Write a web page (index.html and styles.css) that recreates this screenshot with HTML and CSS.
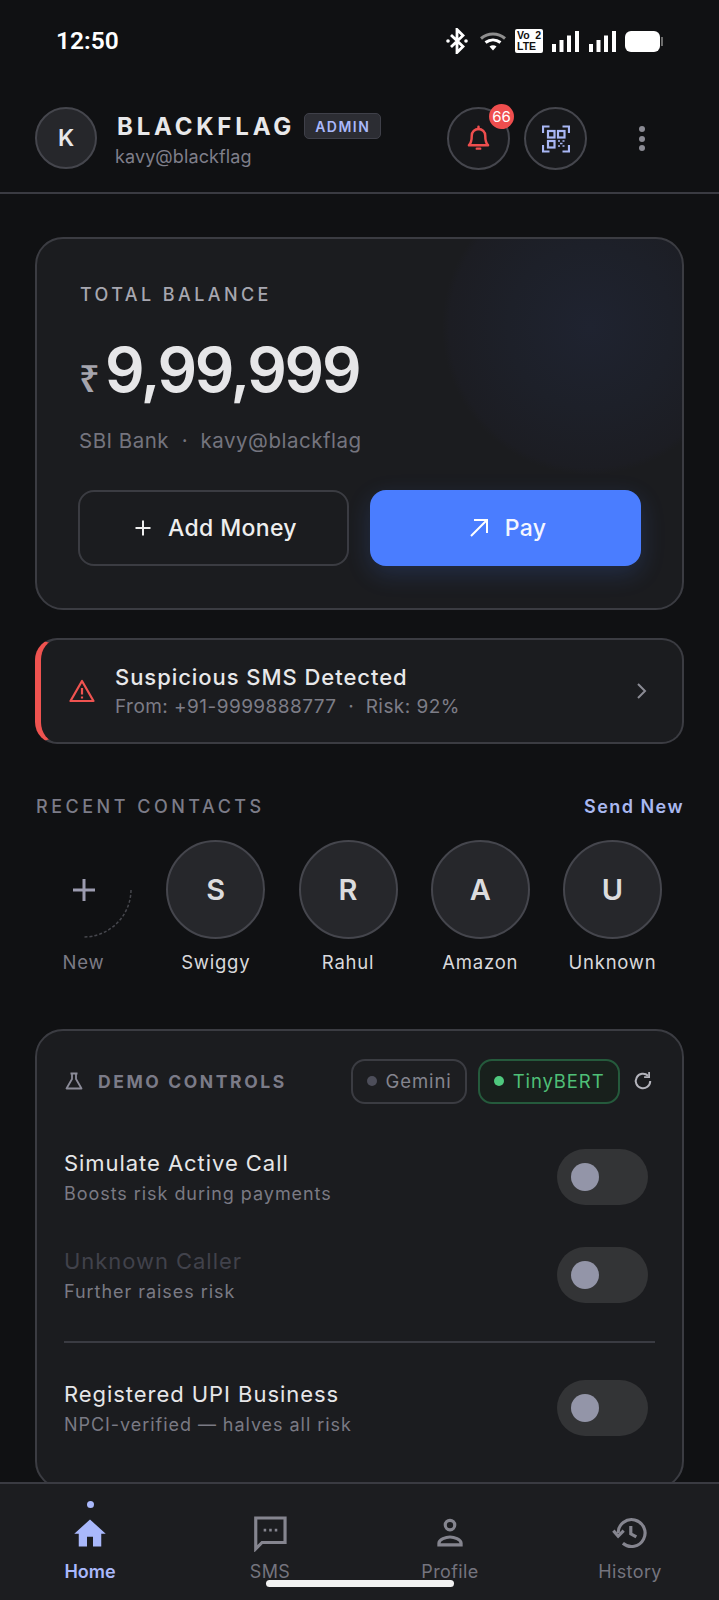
FILE: index.html
```html
<!DOCTYPE html>
<html lang="en">
<head>
<meta charset="utf-8">
<title>Blackflag</title>
<link rel="stylesheet" href="styles.css">
</head>
<body>
<div class="app">
  <div class="status">
    <span class="time">12:50</span>
    <div class="status-icons">
      <svg class="ic-bt" width="22" height="26" viewBox="0 0 22 26"><path d="M5 7l12 11.500-6 6V1.500l6 6L5 19" fill="none" stroke="#fff" stroke-width="2.800"/><circle cx="2" cy="13" r="1.800" fill="#fff"/><circle cx="20" cy="13" r="1.800" fill="#fff"/></svg>
      <svg class="ic-wifi" width="26" height="20" viewBox="0 0 26 20"><path d="M1 7.500C8 1.500 18 1.500 25 7.500" fill="none" stroke="#8e8e8e" stroke-width="3"/><path d="M5.500 11.500C10 8 16 8 20.500 11.500" fill="none" stroke="#fff" stroke-width="3"/><path d="M9.500 15.500c2-1.800 5-1.800 7 0L13 19.500z" fill="#fff"/></svg>
      <div class="volte"><span>Vo</span><span class="volte-2">2</span><span class="volte-lte">LTE</span></div>
      <svg class="ic-sig1" width="27" height="21" viewBox="0 0 27 21"><g fill="#fff"><rect x="0" y="13" width="4" height="8"/><rect x="7.500" y="9" width="4" height="12"/><rect x="15" y="4.500" width="4" height="16.500"/><rect x="23" y="0" width="4" height="21"/></g></svg>
      <svg class="ic-sig2" width="27" height="21" viewBox="0 0 27 21"><g fill="#fff"><rect x="0" y="13" width="4" height="8"/><rect x="7.500" y="9" width="4" height="12"/><rect x="15" y="4.500" width="4" height="16.500"/><rect x="23" y="0" width="4" height="21"/></g></svg>
      <div class="battery"><div class="battery-body"></div><div class="battery-tip"></div></div>
    </div>
  </div>

  <header class="header">
    <div class="avatar">K</div>
    <div class="who">
      <div class="brand-row"><span class="brand">BLACKFLAG</span><span class="admin">ADMIN</span></div>
      <div class="handle">kavy@blackflag</div>
    </div>
    <div class="head-actions">
      <button class="round">
        <svg width="27" height="27" viewBox="0 0 24 24" fill="none" stroke="#ef4e4e" stroke-width="2.200" stroke-linecap="round" stroke-linejoin="round"><path d="M12 3.500a6 6 0 0 0-6 6c0 5-1 7-2.500 8.500h17C19 16.500 18 14.500 18 9.500a6 6 0 0 0-6-6z"/><path d="M12 1.500v2M10.500 21h3"/></svg>
        <span class="count">66</span>
      </button>
      <button class="round">
        <svg width="28" height="28" viewBox="0 0 28 28" fill="none" stroke="#a9b7f5" stroke-width="2.200"><path d="M1 8V1.500h6.500M20.500 1.500H27V8M1 20v6.500h6.500M20.500 26.500H27V20"/><rect x="6" y="6" width="6.500" height="6.500"/><rect x="16" y="6" width="6.500" height="6.500"/><rect x="6" y="16" width="6.500" height="6.500"/><path d="M16 16h2M20.500 16h2M18 18.500h2.500M16 21h2M20.500 21h2" stroke-width="1.600"/></svg>
      </button>
      <div class="kebab"><i></i><i></i><i></i></div>
    </div>
  </header>

  <main class="main">
    <section class="balance">
      <div class="balance-label">TOTAL BALANCE</div>
      <div class="amount"><span class="rupee">₹</span><span class="digits">9,99,999</span></div>
      <div class="bank">SBI Bank &nbsp;·&nbsp; kavy@blackflag</div>
      <div class="balance-actions">
        <button class="btn btn-ghost">
          <svg width="20" height="20" viewBox="0 0 20 20" stroke="#eee" stroke-width="2" fill="none"><path d="M10 2.500v15M2.500 10h15"/></svg>
          Add Money
        </button>
        <button class="btn btn-pay">
          <svg width="22" height="22" viewBox="0 0 22 22" stroke="#fff" stroke-width="2" fill="none"><path d="M3 19L19 3M6 3h13v13"/></svg>
          Pay
        </button>
      </div>
    </section>

    <section class="alert">
      <svg width="26" height="24" viewBox="0 0 26 24" fill="none" stroke="#ef5350" stroke-width="2.200" stroke-linejoin="round"><path d="M13 2L1.500 22h23z"/><path d="M13 9v6.500M13 17.500v2"/></svg>
      <div class="alert-text">
        <div class="alert-title">Suspicious SMS Detected</div>
        <div class="alert-sub">From: +91-9999888777 &nbsp;·&nbsp; Risk: 92%</div>
      </div>
      <svg width="12" height="18" viewBox="0 0 12 18" fill="none" stroke="#8b8b94" stroke-width="2"><path d="M3 2l7 7-7 7"/></svg>
    </section>

    <div class="section-head"><span class="section-title">RECENT CONTACTS</span><span class="send-new">Send New</span></div>

    <div class="contacts">
      <div class="contact">
        <div class="circle circle-new">
          <svg class="new-ring" width="99" height="99" viewBox="0 0 99 99" fill="none"><path d="M97 50A47.500 47.500 0 0 1 50 97" stroke="#46474d" stroke-width="1.500" stroke-dasharray="3 2"/></svg>
          <svg width="26" height="26" viewBox="0 0 26 26" stroke="#9c9cb0" stroke-width="3" fill="none"><path d="M13 2v22M2 13h22"/></svg>
        </div>
        <span class="contact-name name-new">New</span>
      </div>
      <div class="contact"><div class="circle">S</div><span class="contact-name">Swiggy</span></div>
      <div class="contact"><div class="circle">R</div><span class="contact-name">Rahul</span></div>
      <div class="contact"><div class="circle">A</div><span class="contact-name">Amazon</span></div>
      <div class="contact"><div class="circle">U</div><span class="contact-name">Unknown</span></div>
    </div>

    <section class="demo">
      <div class="demo-head">
        <svg width="18" height="18" viewBox="0 0 18 18" fill="none" stroke="#8b8b98" stroke-width="1.800" stroke-linejoin="round"><path d="M5.500 1.500h7M7 1.500V7L1.500 16.500h15L11 7V1.500"/></svg>
        <span class="demo-title">DEMO CONTROLS</span>
        <span class="pill"><i class="dot dot-grey"></i>Gemini</span>
        <span class="pill pill-green"><i class="dot dot-green"></i>TinyBERT</span>
        <svg class="reload" width="20" height="20" viewBox="0 0 18 18" fill="none" stroke="#b4b4bc" stroke-width="1.800"><path d="M15.500 9a6.500 6.500 0 1 1-2-4.700"/><path d="M14.500 1v4.500H10" stroke-width="1.600"/></svg>
      </div>
      <div class="row">
        <div><div class="row-title">Simulate Active Call</div><div class="row-sub">Boosts risk during payments</div></div>
        <div class="toggle"><i></i></div>
      </div>
      <div class="row row-second">
        <div><div class="row-title row-title-off">Unknown Caller</div><div class="row-sub">Further raises risk</div></div>
        <div class="toggle"><i></i></div>
      </div>
      <div class="divider"></div>
      <div class="row">
        <div><div class="row-title">Registered UPI Business</div><div class="row-sub">NPCI-verified — halves all risk</div></div>
        <div class="toggle"><i></i></div>
      </div>
    </section>
  </main>

  <nav class="nav">
    <div class="tab tab-on">
      <i class="tab-dot"></i>
      <svg width="36" height="36" viewBox="0 0 24 24" fill="#a9b8fb"><path d="M12 3L1.500 12.500H4.500V21h5.500v-6.500h4V21h5.500v-8.500h3z"/></svg>
      <span>Home</span>
    </div>
    <div class="tab">
      <svg width="38" height="38" viewBox="0 0 24 24" fill="none" stroke="#85858f" stroke-width="2"><path d="M3 2.500h18.500v15.500H7L3 22z"/><path d="M8 10.200h1.600M11.500 10.200h1.600M15 10.200h1.600" stroke-width="1.800"/></svg>
      <span>SMS</span>
    </div>
    <div class="tab">
      <svg width="38" height="38" viewBox="0 0 24 24" fill="none" stroke="#85858f" stroke-width="2"><circle cx="12" cy="7" r="3"/><path d="M5 19.500v-1c0-2.500 4.500-4 7-4s7 1.500 7 4v1z"/></svg>
      <span>Profile</span>
    </div>
    <div class="tab">
      <svg width="38" height="38" viewBox="0 0 24 24" fill="none" stroke="#85858f" stroke-width="2"><path d="M4.500 12A8.500 8.500 0 1 1 7.500 18.500"/><path d="M1.500 10.500L4.500 14l3.500-3.500" stroke-width="2"/><path d="M12.500 7.500V12.500l3.500 2"/></svg>
      <span>History</span>
    </div>
    <div class="home-bar"></div>
  </nav>
</div>
</body>
</html>
```

FILE: styles.css
```css
* { box-sizing: border-box; }
html, body { margin: 0; padding: 0; background: #101113; }
body { font-family: Inter, "Liberation Sans", sans-serif; color: #e8e8ea; }
i { display: block; }
button { font-family: inherit; }

.app { width: 719px; height: 1600px; display: flex; flex-direction: column; overflow: hidden; }

.status { height: 84px; flex: none; display: flex; justify-content: space-between; align-items: flex-start; padding: 26px 56px 0 56px; }
.time { font-family: Roboto, sans-serif; font-weight: 600; font-size: 24.500px; line-height: 30px; color: #fff; }
.status-icons { display: flex; align-items: center; height: 30px; }
.ic-bt { margin-right: 12px; }
.ic-wifi { margin-right: 9px; }
.ic-sig1 { margin-right: 10px; }
.ic-sig2 { margin-right: 9px; }
.volte { width: 28px; height: 24px; background: #fff; border-radius: 2px; margin-right: 9px; color: #111; font-family: "Liberation Sans", sans-serif; font-weight: 700; font-size: 10.500px; line-height: 11px; padding: 1px 2px; display: grid; grid-template-columns: 1fr auto; }
.volte-lte { grid-column: 1 / 3; }
.battery { display: flex; align-items: center; }
.battery-body { width: 35px; height: 21px; background: #fff; border-radius: 6px; }
.battery-tip { width: 2px; height: 9px; background: #6c6c6c; margin-left: 1px; }

.header { height: 110px; flex: none; border-bottom: 2px solid #3a3b42; display: flex; align-items: flex-start; padding: 23px 0 0 35px; }
.avatar { width: 62px; height: 62px; border-radius: 50%; background: #26272b; border: 2px solid #45464d; display: flex; align-items: center; justify-content: center; font-size: 23px; font-weight: 600; flex: none; }
.who { margin-left: 18px; margin-top: 4px; }
.brand-row { display: flex; align-items: center; height: 30px; }
.brand { font-size: 24px; font-weight: 700; letter-spacing: 3.800px; margin-left: 2px; }
.admin { margin-left: 9px; height: 26px; padding: 0 10px; border-radius: 5px; background: #2c2d33; border: 1px solid #3f4049; color: #a9b8fb; font-size: 14px; font-weight: 600; letter-spacing: 1.500px; display: flex; align-items: center; }
.handle { font-size: 18px; color: #7f7f8a; line-height: 22px; margin-top: 5px; letter-spacing: .1px; }
.head-actions { margin-left: auto; display: flex; align-items: center; gap: 14px; padding-right: 74px; }
.round { width: 63px; height: 63px; border-radius: 50%; background: #17181b; border: 2px solid #45464d; display: flex; align-items: center; justify-content: center; padding: 0; position: relative; }
.count { position: absolute; top: -5px; right: -6px; width: 25px; height: 25px; border-radius: 50%; background: #ef4e4e; color: #fff; font-size: 15px; display: flex; align-items: center; justify-content: center; }
.kebab { margin-left: 38px; display: flex; flex-direction: column; gap: 3.500px; }
.kebab i { width: 6px; height: 6px; border-radius: 50%; background: #8b8b94; }

.main { flex: 1; min-height: 0; overflow: hidden; padding: 43px 35px 0; }

.balance { height: 373px; border-radius: 28px; border: 2px solid #3b3c42; padding: 45px 41px 0; background: radial-gradient(circle 148px at 553px 88px, #1f2330 0%, #1d2029 55%, #1c1d23 95%, rgba(27,28,31,0) 100%), #1b1c1f; }
.balance-label { font-size: 18px; font-weight: 500; letter-spacing: 3.400px; color: #a7a7b0; line-height: 22px; margin-left: 2px; }
.amount { display: flex; align-items: baseline; margin: 25px 0 0 1px; height: 78px; }
.rupee { font-size: 36px; color: #a5a5ae; font-weight: 600; width: 26px; font-family: "Noto Sans", "DejaVu Sans", sans-serif; }
.digits { font-size: 62px; font-weight: 600; letter-spacing: -2.300px; color: #e6e6e8; line-height: 78px; }
.bank { font-size: 20.500px; color: #74747e; margin: 19px 0 0 1px; line-height: 26px; letter-spacing: .5px; }
.balance-actions { display: grid; grid-template-columns: 1fr 1fr; gap: 21px; margin-top: 36px; }
.btn { height: 76px; border-radius: 16px; display: flex; align-items: center; justify-content: center; gap: 15px; font-size: 23px; font-weight: 500; letter-spacing: .35px; padding: 0 0 0 3px; }
.btn-ghost { background: #1b1c1f; border: 2px solid #3b3c42; color: #eee; }
.btn-pay { background: #4a7dff; border: none; color: #f4f6ff; box-shadow: 0 8px 24px rgba(74,125,255,.18); }

.alert { height: 106px; margin-top: 28px; border-radius: 22px; border: 2px solid #3b3c42; border-left: 6px solid #ef5350; background: #1b1c1f; display: flex; align-items: center; padding: 0 35px 0 28px; }
.alert-text { flex: 1; margin-left: 20px; }
.alert-title { font-size: 22px; font-weight: 500; line-height: 28px; letter-spacing: .95px; }
.alert-sub { font-size: 19px; color: #7d7d87; line-height: 24px; margin-top: 4px; letter-spacing: .45px; }

.section-head { display: flex; justify-content: space-between; align-items: center; margin-top: 49px; height: 26px; }
.section-title { font-size: 18px; font-weight: 500; letter-spacing: 3.500px; color: #7c7c88; margin-left: 1px; }
.send-new { font-size: 18px; font-weight: 600; color: #a9b8f0; letter-spacing: 1.450px; }

.contacts { display: grid; grid-template-columns: repeat(5, 99px); justify-content: space-between; margin: 21px 0 0 -1px; width: 628px; }
.contact { display: flex; flex-direction: column; align-items: center; gap: 11px; }
.circle { width: 99px; height: 99px; border-radius: 50%; background: #26272b; border: 2px solid #45464d; display: flex; align-items: center; justify-content: center; font-size: 29px; font-weight: 600; color: #dcdcde; position: relative; }
.circle-new { background: none; border: none; }
.new-ring { position: absolute; inset: 0; }
.contact-name { font-size: 18.500px; color: #d9d9dc; line-height: 24px; white-space: nowrap; letter-spacing: .75px; }
.name-new { color: #7b7b86; }

.demo { margin-top: 55px; height: 460px; border-radius: 28px; border: 2px solid #3b3c42; background: #1b1c1f; padding: 28px 27px 0; }
.demo-head { display: flex; align-items: center; height: 44px; }
.demo-head > svg:first-child { margin-left: 1px; }
.demo-title { font-size: 17.500px; font-weight: 700; letter-spacing: 2.600px; color: #7b7b88; margin-left: 15px; margin-right: auto; }
.pill { height: 45px; padding: 0 13.500px; border-radius: 14px; border: 2px solid #3b3c42; display: flex; align-items: center; gap: 9px; font-size: 18.500px; letter-spacing: .9px; color: #85858f; background: #1d1e21; }
.pill-green { margin-left: 11px; padding: 0 13.500px; border-color: #255a3c; color: #4fbf77; background: #18201c; }
.dot { width: 10px; height: 10px; border-radius: 50%; }
.dot-grey { background: #4d4e5a; }
.dot-green { background: #4fc97e; }
.reload { margin-left: 13px; margin-right: 2px; }

.row { display: flex; justify-content: space-between; align-items: center; height: 56px; margin-top: 41px; padding-right: 7px; }
.demo-head + .row { margin-top: 46px; }
.row-second { margin-top: 42px; }
.row-title { font-size: 22px; line-height: 28px; font-weight: 400; color: #e6e6e8; letter-spacing: .95px; }
.row-title-off { color: #41424b; }
.row-sub { font-size: 18px; line-height: 24px; color: #7a7a84; margin-top: 5px; letter-spacing: .95px; }
.toggle { width: 91px; height: 56px; border-radius: 28px; background: #333436; display: flex; align-items: center; padding-left: 14px; }
.toggle i { width: 28px; height: 28px; border-radius: 50%; background: #9395a8; }
.divider { height: 2px; background: #3a3b42; margin-top: 38px; }
.divider + .row { margin-top: 37px; }

.nav { height: 118px; flex: none; background: #1c1d20; border-top: 2px solid #3a3b42; display: grid; grid-template-columns: repeat(4, 180px); position: relative; }
.tab { display: flex; flex-direction: column; align-items: center; padding-top: 30px; color: #74747e; font-size: 18px; position: relative; }
.tab span { margin-top: 8px; line-height: 24px; letter-spacing: .4px; }
.tab-on { color: #a9b8fb; font-weight: 600; }
.tab-on svg { margin: 1px 0; }
.tab-on span { letter-spacing: 0; }
.tab-dot { position: absolute; top: 17px; width: 7px; height: 7px; border-radius: 50%; background: #a9b8fb; }
.home-bar { position: absolute; left: 266px; top: 96px; width: 188px; height: 7px; border-radius: 4px; background: #f2f2f2; }
```
